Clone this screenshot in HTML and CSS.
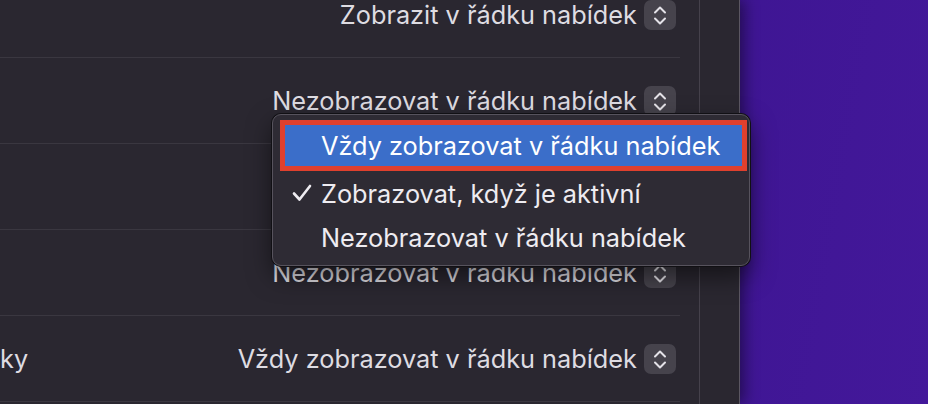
FILE: index.html
```html
<!DOCTYPE html>
<html lang="cs">
<head>
    <meta charset="UTF-8">
    <meta name="viewport" content="width=device-width, initial-scale=1.0">
    <title>Ovládací centrum</title>
    <link rel="stylesheet" href="styles.css">
</head>
<body>

<div class="window">
    <div class="settings">
        <div class="rows">
            <div class="row">
                <span class="label"></span>
                <div class="popup">
                    <span>Zobrazit v řádku nabídek</span>
                    <svg class="stepper" viewBox="0 0 32 30"><path d="M11 12.5 L16 7.5 L21 12.5 M11 18.5 L16 23.5 L21 18.5"/></svg>
                </div>
            </div>
            <div class="row">
                <span class="label"></span>
                <div class="popup">
                    <span>Nezobrazovat v řádku nabídek</span>
                    <svg class="stepper" viewBox="0 0 32 30"><path d="M11 12.5 L16 7.5 L21 12.5 M11 18.5 L16 23.5 L21 18.5"/></svg>
                </div>
            </div>
            <div class="row">
                <span class="label"></span>
                <div class="popup hidden">
                    <span>Zobrazovat, když je aktivní</span>
                    <svg class="stepper" viewBox="0 0 32 30"><path d="M11 12.5 L16 7.5 L21 12.5 M11 18.5 L16 23.5 L21 18.5"/></svg>
                </div>
            </div>
            <div class="row">
                <span class="label"></span>
                <div class="popup">
                    <span>Nezobrazovat v řádku nabídek</span>
                    <svg class="stepper" viewBox="0 0 32 30"><path d="M11 12.5 L16 7.5 L21 12.5 M11 18.5 L16 23.5 L21 18.5"/></svg>
                </div>
            </div>
            <div class="row">
                <span class="label">ky</span>
                <div class="popup">
                    <span>Vždy zobrazovat v řádku nabídek</span>
                    <svg class="stepper" viewBox="0 0 32 30"><path d="M11 12.5 L16 7.5 L21 12.5 M11 18.5 L16 23.5 L21 18.5"/></svg>
                </div>
            </div>
        </div>
    </div>
    <div class="side"></div>

    <!-- open popup menu -->
    <div class="menu">
        <div class="item selected">Vždy zobrazovat v řádku nabídek</div>
        <div class="item">
            <svg class="check" viewBox="0 0 20 18"><path d="M2 9.5 L7.5 15.5 L18 2"/></svg>
            Zobrazovat, když je aktivní
        </div>
        <div class="item">Nezobrazovat v řádku nabídek</div>
    </div>
</div>

</body>
</html>
```

FILE: styles.css
```css
body {
    margin: 0;
    width: 928px;
    height: 404px;
    overflow: hidden;
    font-family: Inter, "Noto Sans", sans-serif;
    background: linear-gradient(100deg, #290d66 0%, #38128a 35%, #43189a 100%);
}

.window {
    position: relative;
    display: flex;
    width: 739px;
    height: 404px;
    background-color: #2a2730;
    border-right: 1px solid #5b5762;
    box-shadow: 4px 0 14px rgba(0, 0, 0, 0.45);
}

.settings {
    width: 699px;
    border-right: 1px solid #45414b;
    overflow: hidden;
}

.rows {
    width: 680px;
    margin-top: -28px;
}

.row {
    display: flex;
    align-items: center;
    justify-content: space-between;
    height: 85px;
    border-bottom: 1px solid #3a3740;
    padding-right: 4px;
    box-sizing: content-box;
}

.label {
    font-size: 25.3px;
    color: #dedce2;
}

.popup {
    display: flex;
    align-items: center;
    gap: 7px;
    font-size: 25.3px;
    color: #dedce2;
}

.popup.hidden {
    visibility: hidden;
}

.stepper {
    width: 32px;
    height: 30px;
    background-color: #46434c;
    border-radius: 7px;
}

.stepper path {
    fill: none;
    stroke: #e4e2e8;
    stroke-width: 2;
    stroke-linecap: round;
    stroke-linejoin: round;
}

.side {
    flex: 1;
}

.menu {
    position: absolute;
    left: 272px;
    top: 114px;
    padding-top: 5px;
    box-sizing: border-box;
    width: 478px;
    height: 152px;
    background-color: #2e2b34;
    border: 1px solid #57535d;
    border-radius: 9px;
    box-shadow: 0 0 0 1px #111014, 0 10px 24px rgba(0, 0, 0, 0.5);
}

.item {
    position: relative;
    display: flex;
    align-items: center;
    height: 44px;
    padding-left: 48px;
    font-size: 25.3px;
    color: #eeecf1;
}

.item.selected {
    height: 41px;
    margin: 0 2px 0 7px;
    padding-left: 36px;
    background-color: #3b6ec9;
    border: 5px solid #e0402d;
    color: #ffffff;
}

.check {
    position: absolute;
    left: 19px;
    top: 13px;
    width: 20px;
    height: 18px;
}

.check path {
    fill: none;
    stroke: #eeecf1;
    stroke-width: 2.6;
    stroke-linecap: round;
    stroke-linejoin: round;
}
```
